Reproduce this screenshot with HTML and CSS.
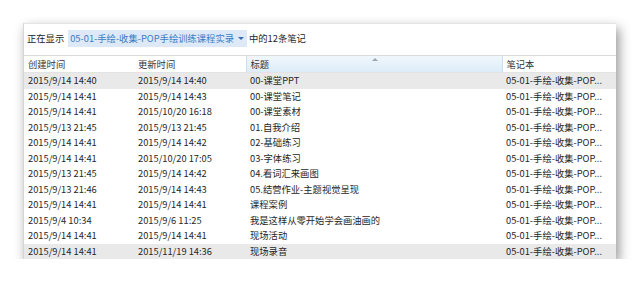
FILE: index.html
```html
<!doctype html>
<html>
  <head>
    <meta charset="utf-8" />
    <title>笔记列表</title>
    <link rel="stylesheet" href="styles.css">
  </head>
  <body>
    <div class="window">
      <div class="toolbar">
        <span class="label">正在显示</span>
        <span class="notebook-select">05-01-手绘-收集-POP手绘训练课程实录<span class="caret"></span></span>
        <span class="label">中的12条笔记</span>
      </div>
      <table class="notes">
        <colgroup>
          <col class="c-created" />
          <col class="c-updated" />
          <col class="c-title" />
          <col class="c-book" />
        </colgroup>
        <thead>
          <tr>
            <th>创建时间</th>
            <th>更新时间</th>
            <th class="sorted">标题<span class="sort-mark"></span></th>
            <th>笔记本</th>
          </tr>
        </thead>
        <tbody>
          <tr class="hover"><td>2015/9/14 14:40</td><td>2015/9/14 14:40</td><td>00-课堂PPT</td><td>05-01-手绘-收集-POP...</td></tr>
          <tr><td>2015/9/14 14:41</td><td>2015/9/14 14:43</td><td>00-课堂笔记</td><td>05-01-手绘-收集-POP...</td></tr>
          <tr><td>2015/9/14 14:41</td><td>2015/10/20 16:18</td><td>00-课堂素材</td><td>05-01-手绘-收集-POP...</td></tr>
          <tr><td>2015/9/13 21:45</td><td>2015/9/13 21:45</td><td>01.自我介绍</td><td>05-01-手绘-收集-POP...</td></tr>
          <tr><td>2015/9/14 14:41</td><td>2015/9/14 14:42</td><td>02-基础练习</td><td>05-01-手绘-收集-POP...</td></tr>
          <tr><td>2015/9/14 14:41</td><td>2015/10/20 17:05</td><td>03-字体练习</td><td>05-01-手绘-收集-POP...</td></tr>
          <tr><td>2015/9/13 21:45</td><td>2015/9/14 14:42</td><td>04.看词汇来画图</td><td>05-01-手绘-收集-POP...</td></tr>
          <tr><td>2015/9/13 21:46</td><td>2015/9/14 14:43</td><td>05.结营作业-主题视觉呈现</td><td>05-01-手绘-收集-POP...</td></tr>
          <tr><td>2015/9/14 14:41</td><td>2015/9/14 14:41</td><td>课程案例</td><td>05-01-手绘-收集-POP...</td></tr>
          <tr><td>2015/9/4 10:34</td><td>2015/9/6 11:25</td><td>我是这样从零开始学会画油画的</td><td>05-01-手绘-收集-POP...</td></tr>
          <tr><td>2015/9/14 14:41</td><td>2015/9/14 14:41</td><td>现场活动</td><td>05-01-手绘-收集-POP...</td></tr>
          <tr class="selected"><td>2015/9/14 14:41</td><td>2015/11/19 14:36</td><td>现场录音</td><td>05-01-手绘-收集-POP...</td></tr>
        </tbody>
      </table>
    </div>
  </body>
</html>
```

FILE: styles.css
```css
body,
html {
  margin: 0;
  background-color: white;
}

body {
  padding: 23px 0 0 23px;
  font-family: "Noto Sans CJK SC", "Noto Sans", sans-serif;
  font-size: 9.3px;
  line-height: 13px;
  color: #262626;
}

.window {
  width: 592px;
  background-color: white;
  border-left: 1px solid #d6d6d6;
  border-top: 1px solid #e4e4e4;
  box-shadow: 3px 5px 11px rgba(0, 0, 0, 0.42);
}

.toolbar {
  height: 29px;
  display: flex;
  align-items: center;
  padding: 0 0 2px 3px;
  border-bottom: 1px solid #d9d9d9;
}

.notebook-select {
  display: inline-flex;
  align-items: center;
  height: 17px;
  margin: 0 2px 0 4px;
  padding: 0 3px 0 2px;
  background-color: #dde9f6;
  color: #3a7dc6;
}

.caret {
  /* small down triangle */
  width: 0;
  height: 0;
  margin-left: 4px;
  border-left: 3px solid transparent;
  border-right: 3px solid transparent;
  border-top: 3px solid #3a6ea8;
}

.notes {
  width: 592px;
  border-collapse: collapse;
  table-layout: fixed;
}

.c-created { width: 110px; }
.c-updated { width: 112px; }
.c-title { width: 256px; }
.c-book { width: 114px; }

.notes th {
  height: 16px;
  padding: 0 4px;
  font-weight: normal;
  text-align: left;
  color: #333;
  border-bottom: 1px solid #e3e3e3;
}

.notes th.sorted {
  position: relative;
  background: linear-gradient(#f0f7fc, #dcecf8);
  border-left: 1px solid #c9dff0;
  border-right: 1px solid #c9dff0;
}

.sort-mark {
  position: absolute;
  left: 125px;
  top: 2px;
  width: 0;
  height: 0;
  border-left: 3px solid transparent;
  border-right: 3px solid transparent;
  border-bottom: 3px solid #9aa6b2;
}

.notes td {
  height: 15.5px;
  padding: 0 4px;
  white-space: nowrap;
  overflow: hidden;
}

.notes tr.hover td,
.notes tr.selected td {
  background-color: #e9e9e9;
}
```
